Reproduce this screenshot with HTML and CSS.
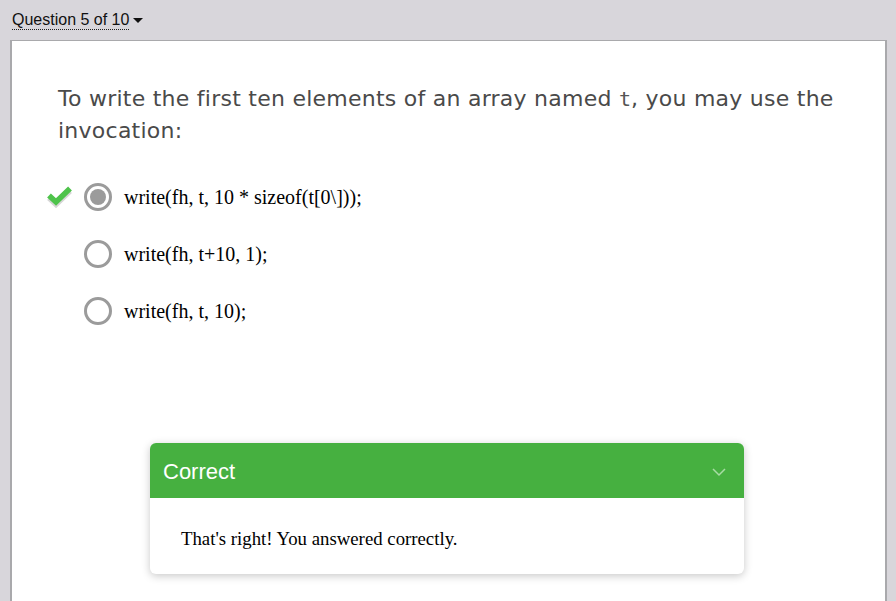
FILE: index.html
```html
<!DOCTYPE html>
<html>
<head>
<meta charset="utf-8">
<link rel="stylesheet" href="styles.css">
</head>
<body>
<div class="topbar">
  <span class="qnav">Question 5 of 10</span><span class="caret"></span>
</div>
<div class="card">
  <p class="question">To write the first ten elements of an array named <code>t</code>, you may use the invocation:</p>
  <div class="options">
    <div class="option">
      <span class="mark">
        <svg width="28" height="26" viewBox="0 0 28 26">
          <path d="M3 14 L10 20.5 L24 7" fill="none" stroke="#d6d6d6" stroke-width="5.5" stroke-linejoin="miter" stroke-linecap="butt"/>
          <path d="M3 11.5 L10 18 L24 4.5" fill="none" stroke="#4ec34b" stroke-width="5.5" stroke-linejoin="miter" stroke-linecap="butt"/>
        </svg>
      </span>
      <span class="radio checked"></span>
      <span class="label">write(fh, t, 10 * sizeof(t[0\]));</span>
    </div>
    <div class="option">
      <span class="mark"></span>
      <span class="radio"></span>
      <span class="label">write(fh, t+10, 1);</span>
    </div>
    <div class="option">
      <span class="mark"></span>
      <span class="radio"></span>
      <span class="label">write(fh, t, 10);</span>
    </div>
  </div>
  <div class="feedback">
    <div class="fb-head">
      <span class="fb-title">Correct</span>
      <svg class="chev" width="14" height="9" viewBox="0 0 14 9"><path d="M1 1 L7 7 L13 1" fill="none" stroke="#a8dca4" stroke-width="1.5"/></svg>
    </div>
    <div class="fb-body">That's right! You answered correctly.</div>
  </div>
</div>
</body>
</html>
```
FILE: styles.css
```css
html, body {
  margin: 0;
  padding: 0;
}
body {
  background: #d8d6db;
  width: 896px;
  height: 601px;
  overflow: hidden;
}
.topbar {
  height: 40px;
  padding-left: 12px;
  box-sizing: border-box;
  padding-top: 11px;
  font-family: "Liberation Sans", Arial, sans-serif;
  font-size: 16px;
  color: #111;
  display: flex;
  align-items: flex-start;
}
.qnav {
  border-bottom: 1px dotted #222;
  line-height: 18px;
}
.caret {
  display: inline-block;
  width: 0;
  height: 0;
  border-left: 5px solid transparent;
  border-right: 5px solid transparent;
  border-top: 5px solid #111;
  margin-left: 4px;
  margin-top: 7px;
}
.card {
  margin-left: 10px;
  width: 875px;
  height: 561px;
  background: #fff;
  border-top: 1px solid #a9a9ac;
  border-left: 2px solid #a9a9ac;
  box-shadow: 2px 0 0 #a9a9ac;
  box-sizing: border-box;
  padding: 42px 0 0 46px;
  overflow: hidden;
}
.question {
  margin: 0;
  font-family: "DejaVu Sans", sans-serif;
  font-size: 22px;
  letter-spacing: 0.25px;
  line-height: 32px;
  color: #4a4a4a;
  width: 800px;
}
.question code {
  font-family: "DejaVu Sans Mono", "Liberation Mono", monospace;
  font-size: 20px;
  letter-spacing: 0;
  color: #555;
}
.options {
  margin-top: 36px;
  display: flex;
  flex-direction: column;
  gap: 29px;
}
.option {
  display: flex;
  align-items: center;
  height: 28px;
}
.mark {
  width: 28px;
  height: 26px;
  margin-left: -12px;
  margin-right: 10px;
  display: flex;
}
.radio {
  width: 22px;
  height: 22px;
  border: 3px solid #9b9b9b;
  border-radius: 50%;
  position: relative;
  flex: none;
}
.radio.checked::after {
  content: "";
  position: absolute;
  left: 3px;
  top: 3px;
  width: 16px;
  height: 16px;
  border-radius: 50%;
  background: #9b9b9b;
}
.label {
  margin-left: 12px;
  font-family: "Liberation Serif", "Times New Roman", serif;
  font-size: 20px;
  color: #000;
}
.feedback {
  margin-top: 118px;
  margin-left: 92px;
  width: 594px;
  border-radius: 6px;
  overflow: hidden;
  background: #fff;
  box-shadow: 0 2px 8px rgba(0,0,0,0.22);
}
.fb-head {
  background: #46b040;
  height: 55px;
  display: flex;
  align-items: center;
  justify-content: space-between;
  padding: 3px 18px 0 13px;
  box-sizing: border-box;
}
.fb-title {
  font-family: "Liberation Sans", Arial, sans-serif;
  font-size: 22px;
  color: #fff;
}
.fb-body {
  padding: 31px 31px 25px;
  font-family: "Liberation Serif", "Times New Roman", serif;
  font-size: 18.8px;
  line-height: 20px;
  color: #000;
}
```
